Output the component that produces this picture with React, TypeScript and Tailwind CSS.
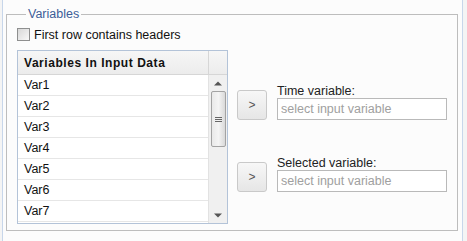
import React from "react";

const rows = ["Var1", "Var2", "Var3", "Var4", "Var5", "Var6", "Var7"];

function ArrowBtn() {
  return (
    <button className="w-[30px] h-[30px] shrink-0 rounded-[3px] border border-[#c9c9c9] bg-gradient-to-b from-[#f7f7f7] to-[#e6e6e6] text-[12px] leading-none text-[#555] flex items-center justify-center">
      &gt;
    </button>
  );
}

function Field({ label }: { label: string }) {
  return (
    <div className="flex items-end gap-[10px]">
      <ArrowBtn />
      <div className="flex flex-col">
        <span className="text-[12.5px] leading-[14px] text-[#222]">{label}</span>
        <input
          placeholder="select input variable"
          className="w-[170px] h-[22px] border border-[#b9b9b9] bg-white px-[3px] text-[12.5px] text-[#222] placeholder:text-[#a0a0a0] outline-none"
        />
      </div>
    </div>
  );
}

export default function App() {
  return (
    <div
      className="w-[467px] h-[241px] bg-[#f4f4f4] pl-[2px]"
      style={{ fontFamily: '"Liberation Sans", Arial, sans-serif' }}
    >
      <div className="w-[461px] h-[241px] border-x border-[#c7d6ea] bg-[#fcfcfc] pt-[7px]">
        <fieldset className="ml-[3px] mr-[4px] h-[224px] border border-[#bdbdbd] pl-[10px]">
          <legend className="ml-[9px] px-[2px] text-[12.5px] leading-[14px] text-[#3d5e98]">
            Variables
          </legend>
          <label className="mt-[7px] flex items-center gap-[4px] h-[13px]">
            <span className="w-[13px] h-[13px] border border-[#8e8f8f] bg-gradient-to-br from-[#d8d8d8] to-[#f8f8f8] shrink-0" />
            <span className="text-[12.5px] leading-[14px] text-[#111]">First row contains headers</span>
          </label>
          <div className="mt-[9px] flex">
            <div className="w-[211px] h-[174px] border border-[#b3c3d8] bg-white flex flex-col">
              <div className="h-[24px] flex border-b border-[#d6d6d6] bg-gradient-to-b from-[#f6f6f6] to-[#ececec] shrink-0">
                <div className="flex-1 pl-[6px] flex items-center text-[12px] font-bold tracking-[0.55px] text-[#111]">
                  Variables In Input Data
                </div>
                <div className="w-[19px] border-l border-[#d6d6d6]" />
              </div>
              <div className="flex flex-1 min-h-0">
                <div className="flex-1 flex flex-col">
                  {rows.map((r) => (
                    <div
                      key={r}
                      className="h-[21px] shrink-0 border-b border-[#e6e6e6] pl-[6px] pt-[1px] flex items-center text-[12.5px] text-[#111]"
                    >
                      {r}
                    </div>
                  ))}
                </div>
                <div className="w-[19px] bg-[#f0f0f0] border-l border-[#e2e2e2] flex flex-col items-center">
                  <svg width="8" height="5" viewBox="0 0 8 5" className="mt-[6px]">
                    <path d="M0 4.5 L4 0.5 L8 4.5 Z" fill="#555" />
                  </svg>
                  <div className="mt-[5px] w-[15px] h-[56px] rounded-[2px] border border-[#a3a3a3] bg-gradient-to-r from-[#e9e9e9] via-[#f4f4f4] to-[#d9d9d9] flex flex-col items-center justify-center gap-[1px]">
                    <span className="w-[7px] h-[1px] bg-[#666]" />
                    <span className="w-[7px] h-[1px] bg-[#666]" />
                    <span className="w-[7px] h-[1px] bg-[#666]" />
                  </div>
                  <div className="flex-1" />
                  <svg width="8" height="5" viewBox="0 0 8 5" className="mb-[5px]">
                    <path d="M0 0.5 L4 4.5 L8 0.5 Z" fill="#555" />
                  </svg>
                </div>
              </div>
            </div>
            <div className="ml-[9px] flex flex-col">
              <div className="mt-[34px]">
                <Field label="Time variable:" />
              </div>
              <div className="mt-[36px]">
                <Field label="Selected variable:" />
              </div>
            </div>
          </div>
        </fieldset>
      </div>
    </div>
  );
}
